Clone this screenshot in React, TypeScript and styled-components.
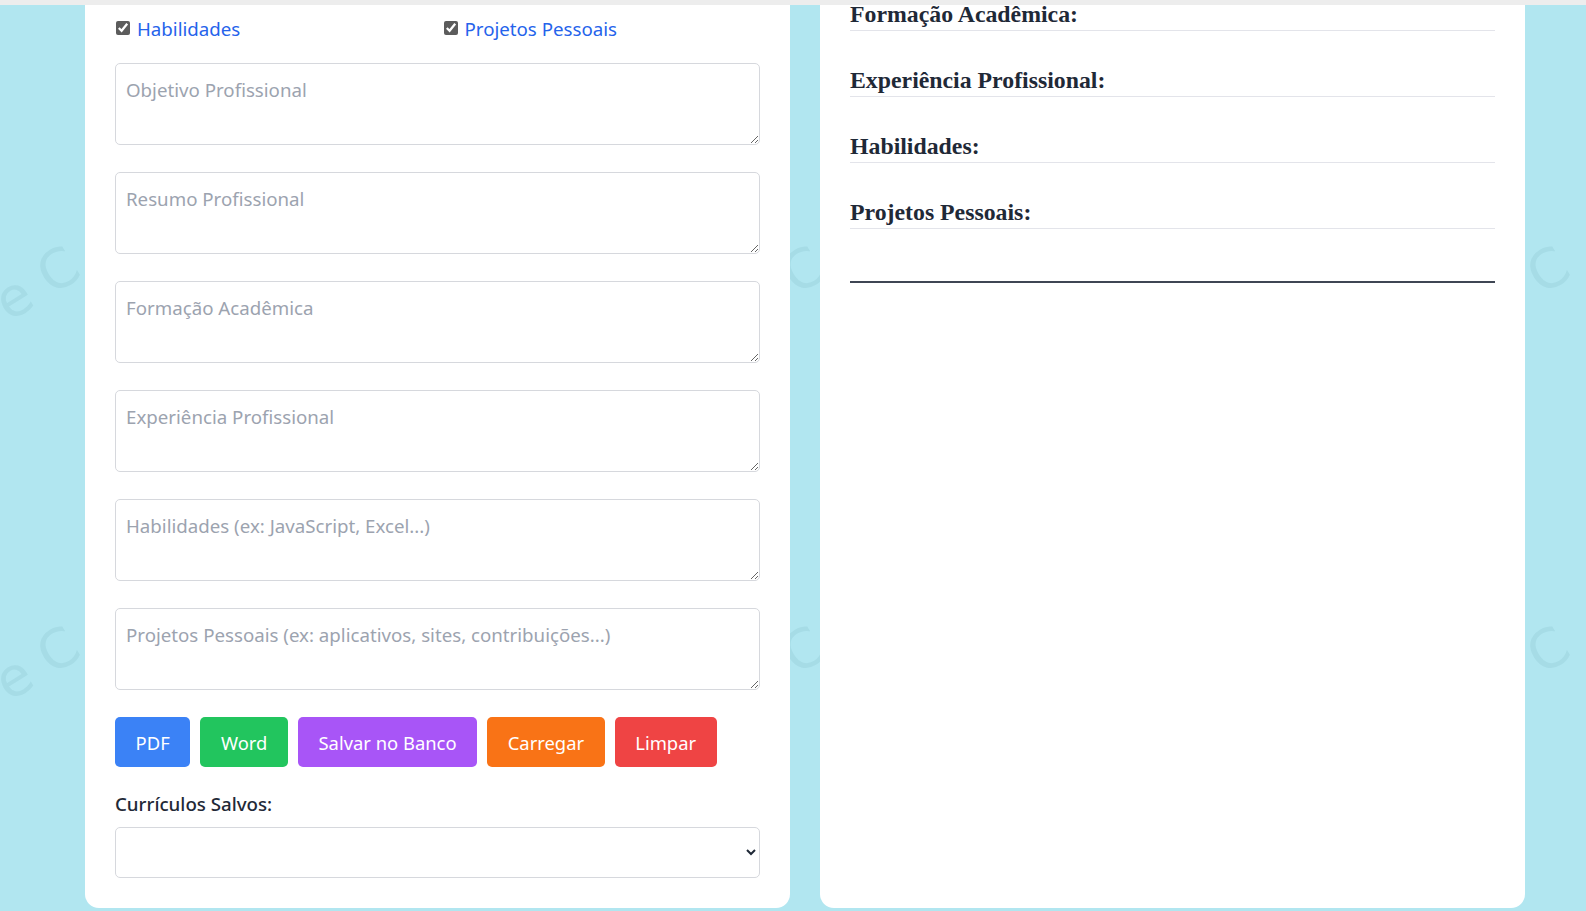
import React from "react";
import styled, { createGlobalStyle } from "styled-components";

const GlobalStyle = createGlobalStyle`
  html, body { margin: 0; padding: 0; height: 100%; overflow: hidden; }
  body {
    background: #b1e6f0;
    font-family: "Noto Sans", "Open Sans", sans-serif;
  }
  *, *::before, *::after { box-sizing: border-box; }
`;

const Watermark = styled.div`
  position: fixed;
  inset: 0;
  z-index: 0;
  pointer-events: none;
  display: grid;
  grid-template-columns: repeat(3, 745px);
  grid-auto-rows: 380px;
  padding-top: 236px;
`;

const Tile = styled.div`
  display: flex;
  align-items: flex-start;
  justify-content: flex-start;
`;

const Mark = styled.span`
  display: inline-block;
  font-family: "DejaVu Sans", sans-serif;
  font-size: 54px;
  line-height: 1;
  white-space: nowrap;
  color: rgba(60, 120, 135, 0.09);
  transform: rotate(-32deg);
  transform-origin: left bottom;
  margin-left: 14px;
  margin-top: 40px;
`;

const TopStrip = styled.div`
  position: fixed;
  top: 0;
  left: 0;
  right: 0;
  height: 5px;
  background: #ededed;
  z-index: 2;
`;

const Columns = styled.div`
  position: relative;
  z-index: 1;
  display: grid;
  grid-template-columns: 705px 705px;
  column-gap: 30px;
  padding-left: 85px;
`;

const Card = styled.section`
  background: #ffffff;
  height: 908px;
  border-radius: 0 0 14px 14px;
  padding: 0 30px 28px;
  display: flex;
  flex-direction: column;
`;

const CheckRow = styled.div`
  display: grid;
  grid-template-columns: 1fr 1fr;
  column-gap: 10px;
  margin-top: 15px;
  margin-bottom: 21px;
`;

const CheckLabel = styled.label`
  display: flex;
  align-items: center;
  gap: 7px;
  font-size: 18.7px;
  line-height: 27px;
  color: #2563eb;
`;

const Check = styled.input`
  width: 14px;
  height: 14px;
  margin: 0 0 0 1px;
  accent-color: #5c5c5c;
  position: relative;
  top: -1px;
`;

const Area = styled.textarea`
  display: block;
  width: 100%;
  height: 82px;
  margin: 0 0 27px;
  padding: 12px 10px;
  border: 1px solid #d6d8dd;
  border-radius: 5px;
  font-family: "Noto Sans", "Open Sans", sans-serif;
  font-size: 18.7px;
  line-height: 28px;
  color: #1f2937;
  background: #fff;
  outline: none;
  &::placeholder { color: #9ca3af; }
`;

const ButtonRow = styled.div`
  display: flex;
  gap: 10px;
  margin-top: 0;
`;

const Btn = styled.button<{ $bg: string }>`
  height: 50px;
  padding: 0 20.6px;
  border: none;
  border-radius: 5px;
  background: ${(p) => p.$bg};
  color: #ffffff;
  font-family: "Noto Sans", "Open Sans", sans-serif;
  font-size: 18.4px;
  cursor: pointer;
`;

const SavedLabel = styled.label`
  display: block;
  margin-top: 23px;
  font-size: 18.7px;
  line-height: 27px;
  font-weight: 500;
  color: #1f2937;
`;

const Select = styled.select`
  display: block;
  width: 100%;
  height: 51px;
  margin-top: 10px;
  padding: 0 10px;
  border: 1px solid #d6d8dd;
  border-radius: 5px;
  background: #fff;
  font-family: "Noto Sans", "Open Sans", sans-serif;
  font-size: 18px;
  color: #1f2937;
`;

const Preview = styled.div`
  display: flex;
  flex-direction: column;
`;

const SectionTitle = styled.h3`
  margin: 0 0 35px;
  padding: 1px 0 2px;
  border-bottom: 1px solid #e3e4ea;
  font-family: "Liberation Serif", "Times New Roman", serif;
  font-weight: 700;
  font-size: 23.8px;
  line-height: 27px;
  color: #1f2937;
`;

const Rule = styled.hr`
  margin: 17px 0 0;
  border: none;
  height: 2px;
  background: #3f4654;
`;

const fields = [
  "Objetivo Profissional",
  "Resumo Profissional",
  "Formação Acadêmica",
  "Experiência Profissional",
  "Habilidades (ex: JavaScript, Excel...)",
  "Projetos Pessoais (ex: aplicativos, sites, contribuições...)",
];

const buttons = [
  { label: "PDF", bg: "#3b82f6" },
  { label: "Word", bg: "#22c55e" },
  { label: "Salvar no Banco", bg: "#a855f7" },
  { label: "Carregar", bg: "#f97316" },
  { label: "Limpar", bg: "#ef4444" },
];

const sections = [
  "Formação Acadêmica:",
  "Experiência Profissional:",
  "Habilidades:",
  "Projetos Pessoais:",
];

export default function App() {
  return (
    <>
      <GlobalStyle />
      <Watermark aria-hidden="true">
        {Array.from({ length: 6 }).map((_, i) => (
          <Tile key={i}>
            <Mark>e C</Mark>
          </Tile>
        ))}
      </Watermark>
      <TopStrip />
      <Columns>
        <Card>
          <CheckRow>
            <CheckLabel>
              <Check type="checkbox" defaultChecked />
              Habilidades
            </CheckLabel>
            <CheckLabel>
              <Check type="checkbox" defaultChecked />
              Projetos Pessoais
            </CheckLabel>
          </CheckRow>
          {fields.map((f) => (
            <Area key={f} placeholder={f} />
          ))}
          <ButtonRow>
            {buttons.map((b) => (
              <Btn key={b.label} $bg={b.bg}>
                {b.label}
              </Btn>
            ))}
          </ButtonRow>
          <SavedLabel>Currículos Salvos:</SavedLabel>
          <Select defaultValue="">
            <option value=""></option>
          </Select>
        </Card>
        <Card>
          <Preview>
            {sections.map((s) => (
              <SectionTitle key={s}>{s}</SectionTitle>
            ))}
            <Rule />
          </Preview>
        </Card>
      </Columns>
    </>
  );
}
